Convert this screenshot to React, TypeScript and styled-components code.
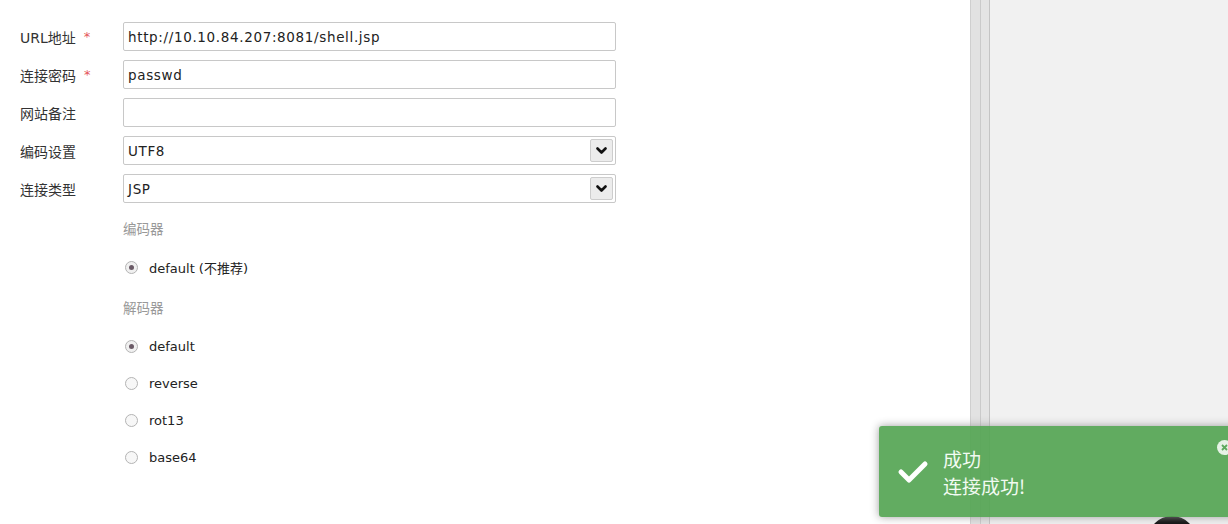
import React, { useState } from 'react';
import styled, { createGlobalStyle } from 'styled-components';

const GlobalStyle = createGlobalStyle`
  html, body {
    margin: 0;
    padding: 0;
    height: 100%;
    overflow: hidden;
  }
  body {
    font-family: 'DejaVu Sans', 'Noto Sans CJK SC', sans-serif;
    background: #fff;
  }
`;

const Page = styled.div`
  display: flex;
  width: 1228px;
  height: 524px;
  position: relative;
  overflow: hidden;
`;

const Main = styled.div`
  width: 970px;
  flex-shrink: 0;
  background: #fff;
  padding: 22px 0 0 20px;
  box-sizing: border-box;
`;

const Splitter = styled.div`
  width: 20px;
  flex-shrink: 0;
  display: flex;
  box-sizing: border-box;
  border-left: 1px solid #cfcfcf;
  border-right: 1px solid #c4c4c4;
  background: #e4e4e4;
`;

const SplitLine = styled.div`
  width: 9px;
  border-right: 1px solid #cacaca;
  background: #e2e2e2;
`;

const Side = styled.div`
  flex: 1;
  background: #f1f1f1;
`;

const Form = styled.div`
  display: flex;
  flex-direction: column;
  gap: 9px;
`;

const Row = styled.div`
  display: flex;
  align-items: center;
`;

const Label = styled.div`
  width: 103px;
  font-size: 14px;
  color: #333;
  display: flex;
  align-items: center;
`;

const Required = styled.span`
  color: #e4555a;
  margin-left: 8px;
  font-size: 13px;
`;

const Input = styled.div`
  width: 493px;
  height: 29px;
  box-sizing: border-box;
  border: 1px solid #c8c8c8;
  border-radius: 2px;
  padding: 0 4px;
  display: flex;
  align-items: center;
  font-size: 13.5px;
  letter-spacing: 0.65px;
  color: #222;
`;

const ArrowButton = styled.div`
  margin-left: auto;
  margin-right: -2px;
  width: 23px;
  height: 23px;
  box-sizing: border-box;
  border: 1px solid #cdcdcd;
  border-radius: 2px;
  background: #ececec;
  display: flex;
  align-items: center;
  justify-content: center;
`;

const Options = styled.div`
  padding-left: 103px;
  display: flex;
  flex-direction: column;
`;

const GroupTitle = styled.div<{ $first?: boolean }>`
  font-size: 13.5px;
  color: #999;
  height: 42px;
  display: flex;
  align-items: center;
  margin-top: ${(p) => (p.$first ? '4px' : '0')};
`;

const RadioRow = styled.div`
  height: 37px;
  display: flex;
  align-items: center;
  font-size: 13px;
  color: #222;
`;

const RadioCircle = styled.span<{ $checked: boolean }>`
  width: 13px;
  height: 13px;
  box-sizing: border-box;
  border-radius: 50%;
  border: 1px solid #b4b4b4;
  background: ${(p) => (p.$checked ? '#f0f0f0' : '#f7f7f7')};
  margin: 0 11px 0 2px;
  display: flex;
  align-items: center;
  justify-content: center;

  &::after {
    content: '';
    width: 5px;
    height: 5px;
    border-radius: 50%;
    background: ${(p) => (p.$checked ? '#6a5a66' : 'transparent')};
  }
`;

const Blob = styled.div`
  position: absolute;
  left: 1148px;
  top: 516px;
  width: 48px;
  height: 48px;
  border-radius: 50%;
  background: #111;
`;

const Toast = styled.div`
  position: absolute;
  left: 879px;
  top: 426px;
  width: 380px;
  height: 91px;
  box-sizing: border-box;
  border-radius: 3px;
  background: #55a654;
  opacity: 0.92;
  box-shadow: 0 0 8px #999;
  display: flex;
  align-items: center;
  padding-left: 18px;
  font-family: 'Noto Sans CJK SC', sans-serif;
  color: #f2fbf2;
`;

const ToastText = styled.div`
  margin-left: 14px;
  display: flex;
  flex-direction: column;
  font-size: 19px;
  line-height: 27px;
`;

const CloseIcon = styled.div`
  position: absolute;
  left: 338px;
  top: 14px;
  width: 15px;
  height: 15px;
  border-radius: 50%;
  background: #e6f3e6;
  display: flex;
  align-items: center;
  justify-content: center;
`;

const Chevron = () => (
  <svg width="11" height="8" viewBox="0 0 11 8">
    <path d="M1.5 1.5 L5.5 5.5 L9.5 1.5" stroke="#111" strokeWidth="2.6" fill="none" strokeLinecap="round" strokeLinejoin="round" />
  </svg>
);

const decoders = ['default', 'reverse', 'rot13', 'base64'];

const App: React.FC = () => {
  const [encoder] = useState('default');
  const [decoder, setDecoder] = useState('default');

  return (
    <>
      <GlobalStyle />
      <Page>
        <Main>
          <Form>
            <Row>
              <Label>
                URL地址<Required>*</Required>
              </Label>
              <Input>http://10.10.84.207:8081/shell.jsp</Input>
            </Row>
            <Row>
              <Label>
                连接密码<Required>*</Required>
              </Label>
              <Input>passwd</Input>
            </Row>
            <Row>
              <Label>网站备注</Label>
              <Input />
            </Row>
            <Row>
              <Label>编码设置</Label>
              <Input>
                UTF8
                <ArrowButton>
                  <Chevron />
                </ArrowButton>
              </Input>
            </Row>
            <Row>
              <Label>连接类型</Label>
              <Input>
                JSP
                <ArrowButton>
                  <Chevron />
                </ArrowButton>
              </Input>
            </Row>
          </Form>

          <Options>
            <GroupTitle $first>编码器</GroupTitle>
            <RadioRow>
              <RadioCircle $checked={encoder === 'default'} />
              default (不推荐)
            </RadioRow>
            <GroupTitle>解码器</GroupTitle>
            {decoders.map((d) => (
              <RadioRow key={d} onClick={() => setDecoder(d)}>
                <RadioCircle $checked={decoder === d} />
                {d}
              </RadioRow>
            ))}
          </Options>
        </Main>
        <Splitter>
          <SplitLine />
        </Splitter>
        <Side />

        <Blob />
        <Toast>
          <svg width="32" height="24" viewBox="0 0 32 24">
            <path d="M4 12 L12 20 L28 4" stroke="#fff" strokeWidth="5" fill="none" strokeLinecap="round" strokeLinejoin="round" />
          </svg>
          <ToastText>
            <span>成功</span>
            <span>连接成功!</span>
          </ToastText>
          <CloseIcon>
            <svg width="7" height="7" viewBox="0 0 7 7">
              <path d="M1 1 L6 6 M6 1 L1 6" stroke="#51a351" strokeWidth="1.8" />
            </svg>
          </CloseIcon>
        </Toast>
      </Page>
    </>
  );
};

export default App;
